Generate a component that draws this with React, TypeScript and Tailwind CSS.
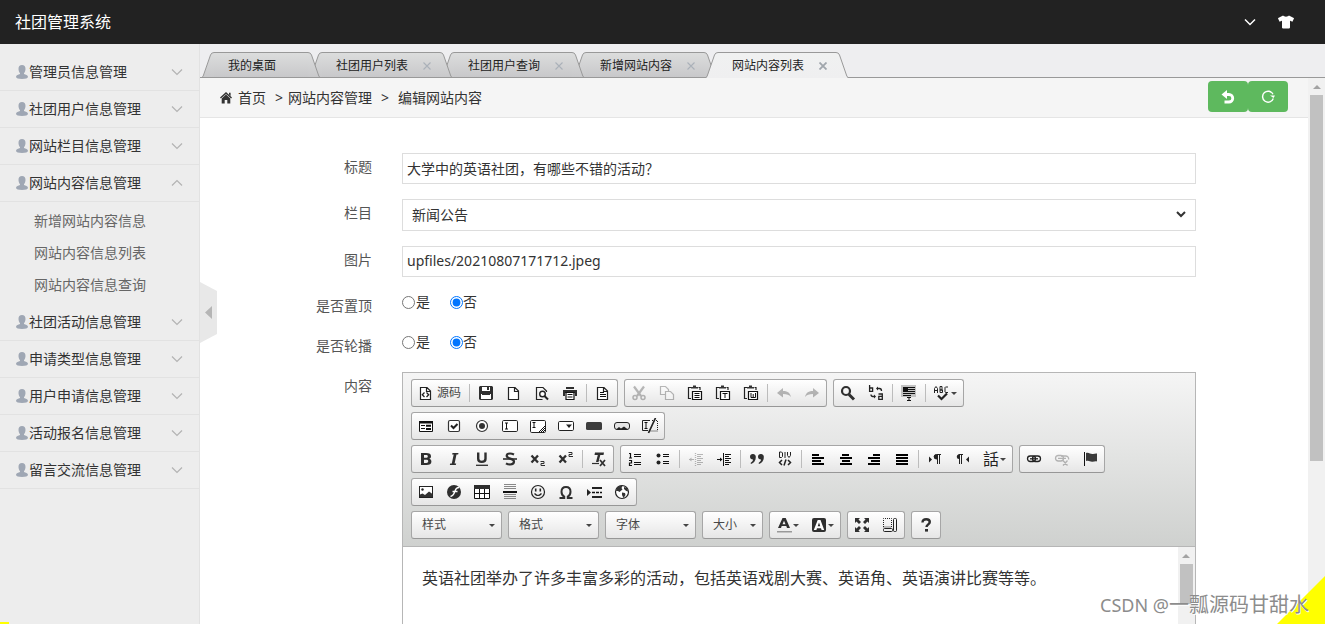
import React, { ReactNode } from "react";
import { FaTshirt } from "react-icons/fa";

const FONT = "font-['Noto_Sans','Noto_Sans_CJK_SC',sans-serif]";

/* ---------- sidebar ---------- */

type MenuGroup = { label: string; children?: string[] };

const MENU: MenuGroup[] = [
  { label: "管理员信息管理" },
  { label: "社团用户信息管理" },
  { label: "网站栏目信息管理" },
  {
    label: "网站内容信息管理",
    children: ["新增网站内容信息", "网站内容信息列表", "网站内容信息查询"],
  },
  { label: "社团活动信息管理" },
  { label: "申请类型信息管理" },
  { label: "用户申请信息管理" },
  { label: "活动报名信息管理" },
  { label: "留言交流信息管理" },
];

function UserGlyph() {
  return (
    <svg width="12" height="14" viewBox="0 0 12 14" fill="#9fa7b4" aria-hidden="true">
      <path d="M6 0C8.300 0 9.600 1.600 9.500 4c0 1.800-.8 3.300-1.500 4.200v.9c1.500.5 4 1 4 2.700 0 1.500-2.500 2.200-6 2.200s-6-.7-6-2.200c0-1.700 2.500-2.200 4-2.700v-.9C3.300 7.300 2.500 5.800 2.500 4 2.400 1.600 3.700 0 6 0z" />
    </svg>
  );
}

function Chevron({ up = false }: { up?: boolean }) {
  return (
    <svg width="12" height="8" viewBox="0 0 12 8" fill="none" stroke="#b3b3b3" strokeWidth="1.2" aria-hidden="true">
      <path d={up ? "M1 6.500L6 1.500l5 5" : "M1 1.500L6 6.500l5-5"} />
    </svg>
  );
}

function Sidebar() {
  return (
    <nav className="relative w-[200px] shrink-0 border-r border-[#e2e2e2] bg-[#ededed] pt-2.5">
      {MENU.map((group) => (
        <div key={group.label}>
          <button
            type="button"
            aria-expanded={!!group.children}
            className="flex h-[37px] w-full items-center border-b border-[#e2e2e2] pl-4 pr-4 text-left text-sm text-[#333]"
          >
            <UserGlyph />
            <span className="ml-px flex-1">{group.label}</span>
            <Chevron up={!!group.children} />
          </button>
          {group.children && (
            <ul className="py-[3px]">
              {group.children.map((child) => (
                <li key={child}>
                  <a href="#" className="block h-8 pl-[34px] text-sm leading-8 text-[#666]">
                    {child}
                  </a>
                </li>
              ))}
            </ul>
          )}
        </div>
      ))}
      <span className="absolute bottom-0 left-0 h-0.5 w-[9px] bg-[#ff0]" />
    </nav>
  );
}

/* ---------- tabs ---------- */

type Tab = { label: string; z: string; closable?: boolean; active?: boolean };

const TABS: Tab[] = [
  { label: "我的桌面", z: "z-[5]" },
  { label: "社团用户列表", z: "z-[4]", closable: true },
  { label: "社团用户查询", z: "z-[3]", closable: true },
  { label: "新增网站内容", z: "z-[2]", closable: true },
  { label: "网站内容列表", z: "z-[6]", closable: true, active: true },
];

function TabCap({ active, flip, id }: { active?: boolean; flip?: boolean; id: string }) {
  return (
    <svg width="12" height="26" viewBox="0 0 12 26" className={flip ? "-scale-x-100" : ""} aria-hidden="true">
      <defs>
        <linearGradient id={id} x1="0" y1="0" x2="0" y2="1">
          <stop offset="0" stopColor={active ? "#f0f1f1" : "#dcdddd"} />
          <stop offset="1" stopColor={active ? "#efeff0" : "#c8c8ca"} />
        </linearGradient>
      </defs>
      <path d="M0 26L1 25 8.500 3Q9.300.5 12 .5V26z" fill={`url(#${id})`} />
      <path
        d={active ? "M0 25.500L1.200 24 8.500 3Q9.300.5 12 .5" : "M12 25.500H0L1.200 24 8.500 3Q9.300.5 12 .5"}
        fill="none"
        stroke="#999"
      />
    </svg>
  );
}

function TabBar() {
  return (
    <div className="flex h-[34px] items-end border-b border-[#999] bg-[#eeeef0] pl-0.5" role="tablist">
      {TABS.map((tab, i) => (
        <div
          key={tab.label}
          className={`relative -mb-px flex h-[26px] ${tab.z} ${i > 0 ? "-ml-2.5" : ""}`}
        >
          <TabCap active={tab.active} id={`cap-l-${i}`} />
          <div
            className={`flex items-center border-t border-[#999] bg-linear-to-b pl-3.5 ${
              tab.active ? "from-[#f0f1f1] to-[#efeff0]" : "border-b from-[#dcdddd] to-[#c8c8ca] pt-px"
            } ${tab.closable ? "pr-px" : "pr-8"}`}
          >
            <button type="button" role="tab" aria-selected={!!tab.active} className="text-xs text-[#222]">
              {tab.label}
            </button>
            {tab.closable && (
              <button type="button" aria-label={`关闭 ${tab.label}`} className="ml-[15px] mr-2 block">
                <svg
                  width="8"
                  height="8"
                  viewBox="0 0 8 8"
                  stroke={tab.active ? "#a0a6ac" : "#aab1b9"}
                  strokeWidth={tab.active ? "1.800" : "1.100"}
                >
                  <path d="M.5.5l7 7M7.500.5l-7 7" />
                </svg>
              </button>
            )}
          </div>
          <TabCap active={tab.active} flip id={`cap-r-${i}`} />
        </div>
      ))}
    </div>
  );
}

/* ---------- editor icons (16 x 16) ---------- */

const INK = "#2f2f2f";
const page = <path d="M3.500 2.500H9L12.500 6v8.500h-10v-12zM8.500 2.500v4h4" fill="#fff" stroke="#222" strokeWidth="1.200" />;
const clip = (
  <>
    <path d="M4 2.500H1.500V13.500H4M11.500 2.500h1.500V5" fill="none" stroke="#222" strokeWidth="1.200" />
    <path d="M4 3.500V2h2V.5h3V2h2v1.500z" fill="#333" />
    <path d="M5.500 6.500h9v8h-9z" fill="#fff" stroke="#111" strokeWidth="1.200" />
  </>
);
const lines = (rows: [number, number, number][]) => (
  <g fill="#000">
    {rows.map(([x, y, w]) => (
      <rect key={y} x={x} y={y} width={w} height="2" />
    ))}
  </g>
);

const ICONS: Record<string, ReactNode> = {
  source: (
    <>
      {page}
      <path d="M6.500 7.500L4.300 9.700 6.500 12M8.500 7.500l2.200 2.200L8.500 12" fill="none" stroke="#222" strokeWidth="1.300" />
    </>
  ),
  save: (
    <>
      <path d="M2 1h12l1 1v12l-1 1H2l-1-1V2z" fill={INK} />
      <path d="M4 2h8v4H4zM3 9h10v5H3z" fill="#fff" />
      <path d="M9 2h2v3H9zM4 9h8v1H4z" fill={INK} />
    </>
  ),
  newpage: page,
  preview: (
    <>
      <path d="M8.500 14.500h-6v-12H9L12.500 6v1" fill="none" stroke="#222" strokeWidth="1.200" />
      <circle cx="8.500" cy="9" r="2.800" fill="#fff" stroke="#222" strokeWidth="1.400" />
      <path d="M10.500 11l3.500 3.500" stroke="#222" strokeWidth="2" />
    </>
  ),
  print: (
    <>
      <path d="M4 2h8v2H4zM1 5h14v6h-2V8H3v3H1z" fill={INK} />
      <path d="M4 7.500h8v7H4z" fill="#fff" stroke="#111" strokeWidth="1.200" />
      <path d="M5.500 9.500h5M5.500 12h5" stroke="#111" />
    </>
  ),
  templates: (
    <>
      {page}
      <path d="M5 7.500h4M5 9.500h6M5 11.500h6" stroke="#111" />
    </>
  ),
  cut: (
    <g fill="none" stroke="#222">
      <path d="M3 1.500l7 9.500M13 1.500L6 11" strokeWidth="2.200" />
      <circle cx="4" cy="12.500" r="2" strokeWidth="1.500" />
      <circle cx="12" cy="12.500" r="2" strokeWidth="1.500" />
    </g>
  ),
  copy: (
    <g fill="#fff" stroke="#222" strokeWidth="1.200">
      <path d="M1.500 1.500h5l3 3v5h-8z" />
      <path d="M6.500 6.500h5l3 3v5h-8z" />
    </g>
  ),
  paste: (
    <>
      {clip}
      <path d="M7.500 8.500h5M7.500 10.500h5M7.500 12.500h5" stroke="#111" />
    </>
  ),
  pastetext: (
    <>
      {clip}
      <path d="M7.500 8.500h5M10 8v5" stroke="#111" />
    </>
  ),
  pasteword: (
    <>
      {clip}
      <path d="M8 8v4.500h4.500V8M10.200 9v3.500" fill="none" stroke="#111" />
    </>
  ),
  undo: <path d="M1 8l6-5v3c4 0 7 1.500 8 6-2-2.300-4-3-8-3v3.500z" fill="#222" />,
  redo: <path d="M15 8L9 3v3c-4 0-7 1.500-8 6 2-2.300 4-3 8-3v3.500z" fill="#222" />,
  find: (
    <>
      <circle cx="6" cy="6" r="4" fill="none" stroke={INK} strokeWidth="2.200" />
      <path d="M9 9.500l5 5" stroke={INK} strokeWidth="3" />
    </>
  ),
  replace: (
    <g fill="none" stroke="#222" strokeWidth="1.300">
      <path d="M1.600 0v6.400h3V3H1.600M10.500 9h3.800v5.400h-3.500v-3h3.500" />
      <path d="M9 3.500h2.500q2 0 2 2.500M3 9.500q0 2 2 2h1" />
      <path d="M10 1.500L8 3.500l2 2zM6 9.500l2 2-2 2z" fill="#222" stroke="none" />
    </g>
  ),
  selectall: (
    <>
      <path d="M0 0h15v12H0z" fill="#c2c2c2" />
      <path d="M2 2.500h12M2 4.500h12M2 6.500h12M2 8.500h12M2 10.500h8" stroke="#111" />
      <path d="M2 2h5v4H2z" fill="#111" />
      <path d="M6 12.500h4M8 12v4M6 15.500h4" stroke="#111" />
    </>
  ),
  spell: (
    <g fill="none" stroke="#222">
      <path d="M.5 8V3.500L2 1.500l1.500 2V8M.5 5.500h3M6 1.500v6h2.500V5H6h2V1.500H6M14 2h-2.500l-.5.500v4.500l.5.500H14" />
      <path d="M4 10.500l3.500 3.500L13 8.500" strokeWidth="2.200" />
    </g>
  ),
  form: (
    <>
      <path d="M1.500 3.500h13v10h-13z" fill="#fff" stroke="#111" />
      <path d="M1 3h14v2.500H1z" fill="#111" />
      <path d="M3 7.500h4M3 10.500h4" stroke="#111" />
      <path d="M8 6.800h5v2H8zM8 10h5v2H8z" fill="#111" />
    </>
  ),
  checkbox: (
    <>
      <rect x="2.500" y="2.500" width="11" height="11" rx="1.500" fill="#fff" stroke="#333" strokeWidth="1.200" />
      <path d="M5 7.500l2.500 2.500L11.500 6" fill="none" stroke="#222" strokeWidth="2" />
    </>
  ),
  radio: (
    <>
      <circle cx="8" cy="8" r="5.500" fill="#fff" stroke="#333" strokeWidth="1.200" />
      <circle cx="8" cy="8" r="3" fill="#333" />
    </>
  ),
  textfield: (
    <>
      <rect x=".5" y="2.500" width="15" height="11" rx="1.200" fill="#fff" stroke="#222" />
      <path d="M3 5h3M4.500 5v6M3 11h3" stroke="#111" />
    </>
  ),
  textarea: (
    <>
      <rect x=".5" y="2.500" width="15" height="12" rx="1.200" fill="#fff" stroke="#222" />
      <path d="M2.500 4.500h3M4 4.500v5M2.500 9.500h3M9 14l6-6M11 14l4-4M13 14l2-2" stroke="#111" />
    </>
  ),
  dropdown: (
    <>
      <rect x=".5" y="3.500" width="15" height="9" rx="1.200" fill="#fff" stroke="#222" />
      <path d="M8 6.500h6L11 10z" fill="#222" />
    </>
  ),
  button: <rect x="0" y="4" width="16" height="8" rx="1.500" fill="#3d3d3d" />,
  imagebutton: (
    <>
      <rect x=".5" y="4.500" width="15" height="7" rx="2.500" fill="#e4e4e4" stroke="#222" />
      <path d="M2 11.500l3-2.500 2 1.500L10 8.500l4 3z" fill="#222" />
    </>
  ),
  hidden: (
    <>
      <path d="M8 2.500H.5v10H6" fill="none" stroke="#222" />
      <path d="M10 2.500h5.500v10.500H8" fill="none" stroke="#222" strokeDasharray="1 1" />
      <path d="M2.500 4.500h3M4 4.500v6M2.500 10.500h3" stroke="#111" />
      <path d="M13.500 0L6.500 15" stroke="#222" strokeWidth="1.700" />
    </>
  ),
  bold: (
    <path
      fillRule="evenodd"
      d="M3 2h5c3.500 0 5 1 5 3.200 0 1.300-.7 2.200-1.900 2.600 1.500.3 2.300 1.400 2.300 2.900C13.400 12.900 11.500 14 8.500 14H3zm3 2v2.800h1.900c1.300 0 1.900-.5 1.900-1.400S9.200 4 7.900 4zm0 4.800v3.100h2.200c1.400 0 2-.6 2-1.600 0-1.100-.7-1.500-2.100-1.500z"
      fill={INK}
    />
  ),
  italic: <path d="M6.500 2h6l-.4 1.600h-1.600L8.600 12.400h1.600L9.800 14h-6l.4-1.600h1.600L7.700 3.600H6.100z" fill={INK} />,
  underline: (
    <>
      <path d="M4.200 1.500v6.200c0 2 1.200 3.200 3.500 3.200s3.800-1.200 3.800-3.200V1.500" fill="none" stroke={INK} strokeWidth="2.400" />
      <path d="M2 14.300h12" stroke={INK} strokeWidth="1.300" />
    </>
  ),
  strike: (
    <>
      <path
        d="M12 3.500C10.500 2.800 9.500 2.500 8 2.500c-2 0-3.300.8-3.300 2.300C4.700 8 12 7.300 12 10.600c0 1.800-1.500 2.900-3.900 2.900-1.600 0-3-.4-4.100-1.100"
        fill="none"
        stroke={INK}
        strokeWidth="2.200"
      />
      <path d="M1 8h14" stroke={INK} strokeWidth="1.600" />
    </>
  ),
  sub: (
    <>
      <path d="M1.500 4.500l6.500 7M8 4.500l-6.500 7" stroke={INK} strokeWidth="2.300" />
      <path d="M10.500 10.500h3.500v2h-3v2H15" fill="none" stroke={INK} />
    </>
  ),
  sup: (
    <>
      <path d="M1.500 4.500l6.500 7M8 4.500l-6.500 7" stroke={INK} strokeWidth="2.300" />
      <path d="M10.500 1.500h3.500v2h-3v2H15" fill="none" stroke={INK} />
    </>
  ),
  removeformat: (
    <>
      <path d="M4 1.500h9l-.5 2.500H9.300L7.500 11H5L6.800 4H3.500z" fill={INK} />
      <path d="M1 12.500h7" stroke={INK} strokeWidth="1.200" />
      <path d="M9 9l5 6M14 9l-5 6" stroke={INK} strokeWidth="1.700" />
    </>
  ),
  ol: (
    <>
      <path d="M2 2.500h1.500V7M2 7h3M2 9.500h2.500V12H2.500v2.500H5" fill="none" stroke="#111" strokeWidth="1.200" />
      <path d="M7 3.500h7M7 5.500h7M7 11.500h7M7 13.500h7" stroke="#111" />
    </>
  ),
  ul: (
    <>
      <circle cx="3.500" cy="4.500" r="2" fill="#222" />
      <circle cx="3.500" cy="11.500" r="2" fill="#222" />
      <path d="M8 3.500h6M8 5.500h6M8 10.500h6M8 12.500h6" stroke="#111" />
    </>
  ),
  outdent: (
    <>
      <path d="M7.500 2v13" stroke="#222" strokeDasharray="1 1" strokeWidth="1.300" />
      <path d="M9 3.500h6M9 5.500h4M9 7.500h6M9 9.500h4M9 11.500h6M9 13.500h4M1 8.500h5" stroke="#222" />
      <path d="M1 8.500L3.500 6.500v4z" fill="#222" />
    </>
  ),
  indent: (
    <>
      <path d="M7.500 2v13" stroke="#111" />
      <path d="M9 3.500h6M9 5.500h4M9 7.500h6M9 9.500h4M9 11.500h6M9 13.500h4M1 8.500h5" stroke="#111" />
      <path d="M6.500 8.500L4 6.500v4z" fill="#111" />
    </>
  ),
  quote: (
    <g fill={INK}>
      <path d="M4 3a2.800 2.800 0 012.800 3.200C6.800 9.500 5 12 2 13l-.4-1C3.200 11 4 9.800 4 8.600 2.200 8.600 1 7.500 1 5.800A2.900 2.900 0 014 3z" />
      <path d="M12 3a2.800 2.800 0 012.800 3.200c0 3.300-1.800 5.800-4.800 6.800l-.4-1c1.600-1 2.400-2.200 2.400-3.400-1.800 0-3-1.100-3-2.800A2.900 2.900 0 0112 3z" />
    </g>
  ),
  div: (
    <g fill="none" stroke="#222">
      <path d="M2.500 1v5.500h2l1-1V2l-1-1zM8 1v6M10.500 1v3.500L12 6.500l1.500-2V1" />
      <path d="M5 9L2.500 11.500 5 14M11 9l2.500 2.500L11 14M9 8.500L7 14.500" strokeWidth="1.500" />
    </g>
  ),
  left: lines([[2, 3, 7], [2, 6, 12], [2, 9, 9], [2, 12, 12]]),
  center: lines([[4, 3, 7], [2, 6, 12], [4, 9, 8], [2, 12, 12]]),
  right: lines([[7, 3, 7], [2, 6, 12], [5, 9, 9], [2, 12, 12]]),
  justify: lines([[2, 3, 12], [2, 6, 12], [2, 9, 12], [2, 12, 12]]),
  ltr: (
    <>
      <path d="M2 5.500L5 8.500 2 11.500z" fill="#222" />
      <path d="M14 3.500H9.500a2 2 0 000 4.500H10M10.500 3v10M12.500 3v10" fill="none" stroke="#222" />
      <path d="M10 3.500H9a2 2 0 000 4.500h1z" fill="#222" />
    </>
  ),
  rtl: (
    <>
      <path d="M14 5.500l-3 3 3 3z" fill="#222" />
      <path d="M8 3.500H3.500M4.500 3v10M6.500 3v10" fill="none" stroke="#222" />
      <path d="M5 3.500H4a2 2 0 000 4.500h1z" fill="#222" />
    </>
  ),
  link: (
    <g fill="none" stroke="#222" strokeWidth="1.300">
      <rect x="1.500" y="5" width="8" height="5.500" rx="2.700" />
      <rect x="6.500" y="5" width="8" height="5.500" rx="2.700" />
      <path d="M4 7.800h8" />
    </g>
  ),
  unlink: (
    <g fill="none" stroke="#222" strokeWidth="1.300">
      <rect x="1.500" y="4.500" width="8" height="5.500" rx="2.700" />
      <path d="M7 5h5a2.700 2.700 0 012.500 3.500M4 7.300h8M9 9.500l4.500 5M13.500 9.500L9 14.500" />
    </g>
  ),
  flag: (
    <>
      <path d="M2.500 1v14" stroke="#111" />
      <path d="M4 2c3-1 4.500 1.500 7 1 1.500-.2 2.500-.8 4-.500v8c-2-.5-3 .5-5 .3C7.500 10.500 7 9 4 10z" fill="#3a3a3a" />
    </>
  ),
  image: (
    <>
      <rect x="1.500" y="2.500" width="13" height="11" fill="#fff" stroke="#222" />
      <circle cx="4.500" cy="5.500" r="1.200" fill="#222" />
      <path d="M2 13v-2.500l2.500-1L7 11l4-3.500 3.500 2.500v3z" fill="#333" />
    </>
  ),
  flash: (
    <>
      <circle cx="8" cy="8" r="7" fill={INK} />
      <path d="M13 3.500c-3 0-3.500 2-4.200 4h2.700M8.800 7.500c-.8 2.500-1.300 4.500-4.300 5M6.500 7.500h3" fill="none" stroke="#fff" strokeWidth="1.400" />
    </>
  ),
  table: (
    <>
      <path d="M.5 2.500h15v12H.5zM.5 9.500h15M5.500 5v9M10.500 5v9" fill="#fff" stroke="#111" />
      <path d="M0 1h16v4H0z" fill={INK} />
    </>
  ),
  hr: (
    <>
      <path d="M2 .5h12M2 2.500h12M2 4.500h12M2 10.500h12M2 12.500h12M2 14.500h12" stroke="#888" />
      <path d="M1 7h14v2H1z" fill="#111" />
    </>
  ),
  smile: (
    <>
      <circle cx="8" cy="8" r="6.500" fill="none" stroke="#222" strokeWidth="1.200" />
      <path d="M5.700 4.500v3M10.300 4.500v3" stroke="#222" strokeWidth="1.600" />
      <path d="M4.500 9.500q3.500 4 7 0" fill="none" stroke="#222" strokeWidth="1.200" />
    </>
  ),
  omega: (
    <path
      d="M1.500 14h4.700v-1.300C4.300 11.600 3.500 9.800 3.500 7.700c0-3 1.700-4.700 4.500-4.700s4.500 1.700 4.500 4.700c0 2.100-.8 3.900-2.700 5V14h4.700"
      fill="none"
      stroke={INK}
      strokeWidth="2"
    />
  ),
  pagebreak: (
    <>
      <path d="M1 5l4 3.500L1 12z" fill="#222" />
      <path d="M6 3h10v2H6zM6 12h10v2H6z" fill="#222" />
      <path d="M6 8.500h10" stroke="#111" strokeWidth="1.500" strokeDasharray="3 1" />
    </>
  ),
  globe: (
    <>
      <circle cx="8" cy="8" r="6.500" fill="#fff" stroke="#222" strokeWidth="1.200" />
      <path d="M3 3.500C5 1.700 7 1.500 8.500 2L7.500 4l1 1.500L5.500 8 4 7 2 7zM10 3l3 1 1.200 3.500-2-.5L10 5zM8 8.500l3 .5.500 2-2 3-1.500-3z" fill="#333" />
    </>
  ),
  textcolor: (
    <>
      <path fillRule="evenodd" d="M6.500 1h3.200L14 11h-3l-.7-1.900H5.700L5 11H2zm1.500 2.700L6.500 7.200h3z" fill={INK} />
      <path d="M1 14h15v1.500H1z" fill="#999" />
    </>
  ),
  bgcolor: (
    <>
      <rect x="1" y="1" width="14" height="14" rx="2" fill={INK} />
      <path fillRule="evenodd" d="M6.700 3h2.800l3.700 10h-2.600l-.6-1.800H6L5.400 13H2.800zm1.300 2.600L6.700 9.300h2.600z" fill="#fff" />
    </>
  ),
  maximize: (
    <g fill={INK}>
      <path d="M1 1h5L4.500 2.500 7 5 5 7 2.500 4.500 1 6zM15 1h-5l1.500 1.500L9 5l2 2 2.500-2.500L15 6zM1 15h5l-1.500-1.500L7 11 5 9l-2.500 2.500L1 10zM15 15h-5l1.500-1.500L9 11l2-2 2.500 2.500L15 10z" />
    </g>
  ),
  blocks: (
    <g fill="none" stroke="#222">
      <path d="M1.500 10V1.500h8V10z" strokeDasharray="1 1" />
      <rect x="1.500" y="11.500" width="9" height="3" rx="1" />
      <rect x="11.500" y="1.500" width="3" height="13" rx="1" />
    </g>
  ),
  about: (
    <>
      <path d="M4.500 5.500C4.500 3.200 6 2.200 8.200 2.200s3.600 1 3.600 2.900c0 2.300-3.300 2.300-3.300 5" fill="none" stroke={INK} strokeWidth="2.400" />
      <path d="M7 12h3v2.600H7z" fill={INK} />
    </>
  ),
};

/* ---------- editor toolbar ---------- */

type Item = { icon: string; title: string; text?: string; off?: boolean; arrow?: boolean } | "|";
type Group = Item[] | { combo: string; width: string };

const ROWS: Group[][] = [
  [
    [
      { icon: "source", title: "源码", text: "源码" },
      "|",
      { icon: "save", title: "保存" },
      { icon: "newpage", title: "新建" },
      { icon: "preview", title: "预览" },
      { icon: "print", title: "打印" },
      "|",
      { icon: "templates", title: "模板" },
    ],
    [
      { icon: "cut", title: "剪切", off: true },
      { icon: "copy", title: "复制", off: true },
      { icon: "paste", title: "粘贴" },
      { icon: "pastetext", title: "粘贴为无格式文本" },
      { icon: "pasteword", title: "从 Word 粘贴" },
      "|",
      { icon: "undo", title: "撤消", off: true },
      { icon: "redo", title: "重做", off: true },
    ],
    [
      { icon: "find", title: "查找" },
      { icon: "replace", title: "替换" },
      "|",
      { icon: "selectall", title: "全选" },
      "|",
      { icon: "spell", title: "拼写检查", arrow: true },
    ],
  ],
  [
    [
      { icon: "form", title: "表单" },
      { icon: "checkbox", title: "复选框" },
      { icon: "radio", title: "单选按钮" },
      { icon: "textfield", title: "单行文本" },
      { icon: "textarea", title: "多行文本" },
      { icon: "dropdown", title: "列表/菜单" },
      { icon: "button", title: "按钮" },
      { icon: "imagebutton", title: "图像按钮" },
      { icon: "hidden", title: "隐藏域" },
    ],
  ],
  [
    [
      { icon: "bold", title: "加粗" },
      { icon: "italic", title: "倾斜" },
      { icon: "underline", title: "下划线" },
      { icon: "strike", title: "删除线" },
      { icon: "sub", title: "下标" },
      { icon: "sup", title: "上标" },
      "|",
      { icon: "removeformat", title: "清除格式" },
    ],
    [
      { icon: "ol", title: "编号列表" },
      { icon: "ul", title: "项目列表" },
      "|",
      { icon: "outdent", title: "减少缩进量", off: true },
      { icon: "indent", title: "增加缩进量" },
      "|",
      { icon: "quote", title: "块引用" },
      { icon: "div", title: "创建 DIV 容器" },
      "|",
      { icon: "left", title: "左对齐" },
      { icon: "center", title: "居中" },
      { icon: "right", title: "右对齐" },
      { icon: "justify", title: "两端对齐" },
      "|",
      { icon: "ltr", title: "文字方向为从左至右" },
      { icon: "rtl", title: "文字方向为从右至左" },
      { icon: "language", title: "设置语言", arrow: true },
    ],
    [
      { icon: "link", title: "插入超链接" },
      { icon: "unlink", title: "取消超链接", off: true },
      { icon: "flag", title: "锚点" },
    ],
  ],
  [
    [
      { icon: "image", title: "图像" },
      { icon: "flash", title: "Flash" },
      { icon: "table", title: "表格" },
      { icon: "hr", title: "水平线" },
      { icon: "smile", title: "表情符" },
      { icon: "omega", title: "特殊符号" },
      { icon: "pagebreak", title: "分页符" },
      { icon: "globe", title: "iFrame" },
    ],
  ],
  [
    { combo: "样式", width: "w-[91px]" },
    { combo: "格式", width: "w-[91px]" },
    { combo: "字体", width: "w-[91px]" },
    { combo: "大小", width: "w-[61px]" },
    [
      { icon: "textcolor", title: "文本颜色", arrow: true },
      { icon: "bgcolor", title: "背景颜色", arrow: true },
    ],
    [
      { icon: "maximize", title: "全屏" },
      { icon: "blocks", title: "显示区块" },
    ],
    [{ icon: "about", title: "关于" }],
  ],
];

const SHELL =
  "flex h-7 items-center rounded-[3px] border border-[#a6a6a6] border-b-[#979797] bg-linear-to-b from-white to-[#e6e6e6]";

function Caret() {
  return (
    <svg width="6" height="3" viewBox="0 0 6 3" fill="#444" className="shrink-0" aria-hidden="true">
      <path d="M0 0h6L3 3z" />
    </svg>
  );
}

function ToolItem({ item }: { item: Item }) {
  if (item === "|") return <span className="mx-0.5 h-[18px] w-px bg-[#bcbcbc]" />;
  return (
    <button
      type="button"
      title={item.title}
      aria-label={item.title}
      disabled={item.off}
      className={`flex h-full items-center gap-px px-1.5 ${item.off ? "opacity-30" : ""}`}
    >
      {item.icon === "language" ? (
        <span className="w-4 text-base leading-none text-[#222]">話</span>
      ) : (
        <svg width="16" height="16" viewBox="0 0 16 16" className="shrink-0" aria-hidden="true">
          {ICONS[item.icon]}
        </svg>
      )}
      {item.text && <span className="ml-0.5 text-xs text-[#484848]">{item.text}</span>}
      {item.arrow && <Caret />}
    </button>
  );
}

function Toolbar() {
  return (
    <div className="flex flex-col gap-[5px] border-b border-[#b6b6b6] bg-linear-to-b from-[#f5f5f5] to-[#cfd1cf] px-2 pb-[7px] pt-1.5">
      {ROWS.map((row, r) => (
        <div key={r} className="flex gap-1.5">
          {row.map((group, g) =>
            Array.isArray(group) ? (
              <div key={g} className={SHELL}>
                {group.map((item, i) => (
                  <ToolItem key={i} item={item} />
                ))}
              </div>
            ) : (
              <button
                key={g}
                type="button"
                aria-haspopup="listbox"
                className={`${SHELL} ${group.width} justify-between pl-2.5 pr-1.5 text-xs text-[#484848]`}
              >
                {group.combo}
                <Caret />
              </button>
            )
          )}
        </div>
      ))}
    </div>
  );
}

/* ---------- scroll bar ---------- */

function ScrollBar({ thumb }: { thumb: string }) {
  return (
    <div className="flex w-[17px] shrink-0 flex-col items-center bg-[#f1f1f1]" aria-hidden="true">
      <div className="flex h-[17px] shrink-0 items-center justify-center">
        <svg width="8" height="4" viewBox="0 0 8 4" fill="#a3a3a3">
          <path d="M0 4l4-4 4 4z" />
        </svg>
      </div>
      <div className={`w-[13px] bg-[#c1c1c1] ${thumb}`} />
    </div>
  );
}

/* ---------- form ---------- */

const FIELD = "h-[31px] w-full border border-[#ddd] bg-white px-1 pb-0.5 text-sm text-[#333] outline-none";

function Row({ label, htmlFor, children, h = "" }: { label: string; htmlFor: string; children: ReactNode; h?: string }) {
  return (
    <div className={`flex items-start ${h}`}>
      <label htmlFor={htmlFor} id={`${htmlFor}-label`} className="w-1/6 shrink-0 pr-[15px] text-right text-sm leading-7 text-[#555]">
        {label}
      </label>
      <div className="w-3/4 px-[15px]">{children}</div>
    </div>
  );
}

function YesNo({ name }: { name: string }) {
  return (
    <div className="flex h-5 items-center gap-5 text-sm text-[#333]">
      <label className="flex items-center">
        <input type="radio" name={name} id={name} value="1" className="mr-px size-[13px]" />是
      </label>
      <label className="flex items-center">
        <input type="radio" name={name} value="0" defaultChecked className="size-[13px]" />否
      </label>
    </div>
  );
}

function ContentForm() {
  return (
    <form className="flex flex-col gap-[15px] pl-1 pr-1.5 pt-[35px]">
      <Row label="标题" htmlFor="title">
        <input id="title" className={FIELD} defaultValue="大学中的英语社团，有哪些不错的活动？" />
      </Row>
      <Row label="栏目" htmlFor="column">
        <div className="relative">
          <select id="column" className="block h-8 w-full appearance-none border border-[#ddd] bg-white px-[9px] text-sm text-[#333] outline-none">
            <option>新闻公告</option>
          </select>
          <svg
            width="10"
            height="7"
            viewBox="0 0 10 7"
            fill="none"
            stroke="#333"
            strokeWidth="2"
            className="pointer-events-none absolute right-2.5 top-3"
            aria-hidden="true"
          >
            <path d="M1 1l4 4 4-4" />
          </svg>
        </div>
      </Row>
      <Row label="图片" htmlFor="picture">
        <input id="picture" className={FIELD} defaultValue="upfiles/20210807171712.jpeg" />
      </Row>
      <Row label="是否置顶" htmlFor="top" h="h-[25px]">
        <YesNo name="top" />
      </Row>
      <Row label="是否轮播" htmlFor="carousel" h="h-[25px]">
        <YesNo name="carousel" />
      </Row>
      <Row label="内容" htmlFor="content">
        <div className="border border-[#b6b6b6]">
          <Toolbar />
          <div className="flex h-[200px]">
            <div
              id="content"
              role="textbox"
              aria-multiline="true"
              aria-labelledby="content-label"
              contentEditable
              suppressContentEditableWarning
              className="flex-1 p-[19px] text-base leading-6 text-[#333] outline-none"
            >
              英语社团举办了许多丰富多彩的活动，包括英语戏剧大赛、英语角、英语演讲比赛等等。
            </div>
            <ScrollBar thumb="h-10" />
          </div>
        </div>
      </Row>
    </form>
  );
}

function Breadcrumb() {
  return (
    <div className="flex h-10 shrink-0 items-start justify-between border-b border-[#e5e5e5] bg-[#f5f5f5] px-5">
      <nav className="flex items-center text-sm leading-10 text-[#333]">
        <svg width="12" height="12" viewBox="0 0 12 12" fill="#333" className="mr-1.5" aria-hidden="true">
          <path d="M6 0l6 5.600-.9.900L6 1.900.9 6.500 0 5.600z" />
          <path d="M6 2.600l4.300 4V11.500H7.300V8H4.700v3.500h-3V6.600z" />
          <path d="M9 .8h1.600V4L9 2.500z" />
        </svg>
        <a href="#">首页</a>
        <span className="ml-[9px] mr-[5px]">&gt;</span>
        <a href="#">网站内容管理</a>
        <span className="mx-[9px]">&gt;</span>
        <span>编辑网站内容</span>
      </nav>
      <div className="flex pt-[3px]">
        <button type="button" aria-label="返回" className="flex h-[31px] w-10 items-center justify-center rounded bg-[#5eb95e]">
          <svg width="14" height="14" viewBox="0 0 14 14" fill="none" stroke="#fff" strokeWidth="2.800" aria-hidden="true">
            <path d="M4 4.500h4a3.700 3.700 0 010 7.500H3.500" />
            <path d="M6 0v9L.5 4.500z" fill="#fff" stroke="none" />
          </svg>
        </button>
        <button type="button" aria-label="刷新" className="flex h-[31px] w-10 items-center justify-center rounded bg-[#5eb95e]">
          <svg width="14" height="14" viewBox="0 0 14 14" fill="none" stroke="#fff" strokeWidth="1.400" aria-hidden="true">
            <path d="M12 4.200A5.500 5.500 0 1012.300 8.500" />
            <path d="M9 5.500h5L12.500 8z" fill="#fff" stroke="none" />
          </svg>
        </button>
      </div>
    </div>
  );
}

export default function App() {
  return (
    <div className={`relative flex h-screen flex-col overflow-hidden bg-white ${FONT}`} lang="zh-CN">
      <header className="flex h-11 shrink-0 items-center justify-between bg-[#222] pl-[15px] pr-[31px] text-white">
        <h1 className="text-base">社团管理系统</h1>
        <div className="flex items-center gap-[22px]">
          <button type="button" aria-label="用户菜单">
            <svg width="12" height="8" viewBox="0 0 12 8" fill="none" stroke="#fff" strokeWidth="1.500" aria-hidden="true">
              <path d="M1 1.500l5 5 5-5" />
            </svg>
          </button>
          <button type="button" aria-label="换肤">
            <FaTshirt size={16} />
          </button>
        </div>
      </header>
      <div className="flex min-h-0 flex-1">
        <Sidebar />
        <div className="relative flex min-w-0 flex-1 flex-col">
          <TabBar />
          <div className="flex min-h-0 flex-1">
            <main className="min-w-0 flex-1 overflow-hidden">
              <Breadcrumb />
              <ContentForm />
            </main>
            <ScrollBar thumb="h-[67%]" />
          </div>
          <button type="button" aria-label="收起菜单" className="absolute left-0 top-[238px]">
            <svg width="17" height="61" viewBox="0 0 17 61" aria-hidden="true">
              <path d="M0 0l17 9v43L0 61z" fill="#e8e8e8" />
              <path d="M12 24v13l-7-6.500z" fill="#b5b5b5" />
            </svg>
          </button>
        </div>
      </div>
      <svg width="48" height="48" viewBox="0 0 48 48" className="absolute bottom-0 right-0" aria-hidden="true">
        <path d="M48 0v48H0z" fill="#ff0" />
      </svg>
      <p className="absolute bottom-1 right-4 z-10 text-[20px] leading-[30px] text-[#8c8c8c] [text-shadow:1px_1px_0_#fff]">
        <span className="text-lg">CSDN @</span>一瓢源码甘甜水
      </p>
    </div>
  );
}
